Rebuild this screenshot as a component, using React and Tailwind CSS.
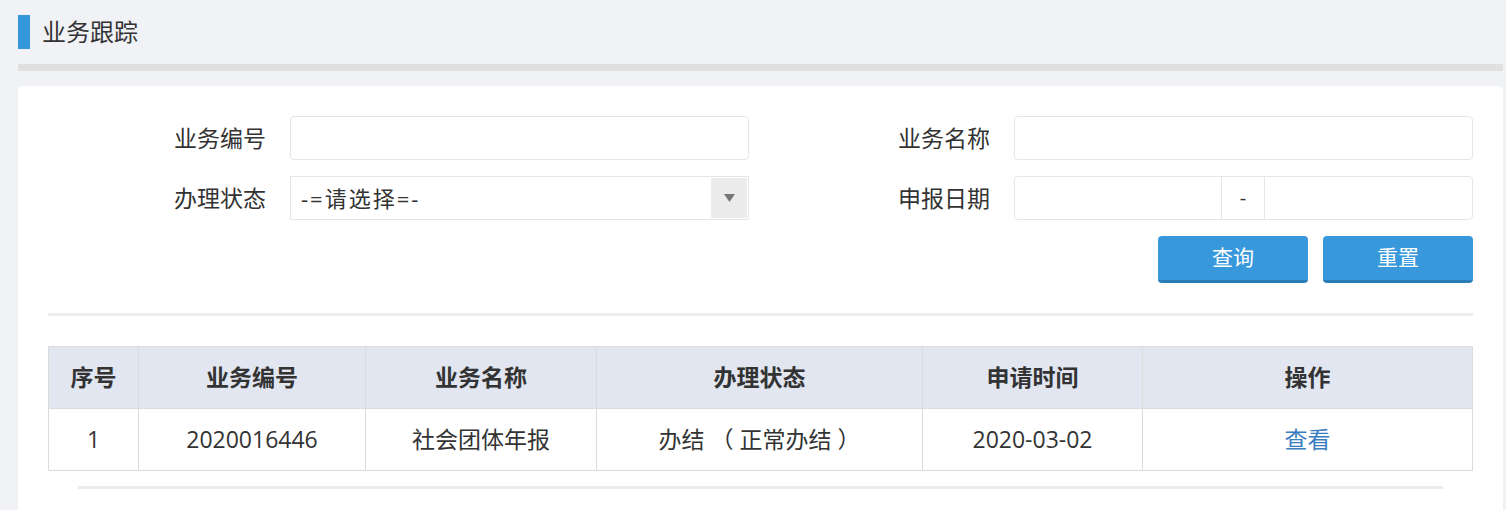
import React from "react";

const font = { fontFamily: '"Microsoft YaHei", "Open Sans", "Noto Sans CJK SC", sans-serif' };

function Field({ label, children }) {
  return (
    <div className="flex items-center gap-6">
      <div className="w-[218px] text-right text-[23px] text-[#333]">{label}</div>
      <div className="w-[459px] h-[44px]">{children}</div>
    </div>
  );
}

export default function App() {
  const cols = [
    { t: "序号", w: "w-[90px]", v: "1" },
    { t: "业务编号", w: "w-[227px]", v: "2020016446" },
    { t: "业务名称", w: "w-[231px]", v: "社会团体年报" },
    { t: "办理状态", w: "w-[326px]", v: "办结 （ 正常办结 ）" },
    { t: "申请时间", w: "w-[220px]", v: "2020-03-02" },
    { t: "操作", w: "", v: "查看", link: true },
  ];
  return (
    <div className="w-[1506px] h-[510px] overflow-hidden bg-[#f0f2f6] pl-[18px] pr-[3px]" style={font}>
      <div className="flex items-center h-[64px]">
        <div className="w-[12px] h-[34px] bg-[#3498db]" />
        <div className="ml-[12px] text-[24px] text-[#333] leading-none">业务跟踪</div>
      </div>
      <div className="h-[7px] bg-[#e0e0e0]" />
      <div className="mt-[15px] bg-white rounded-[5px] px-[30px] pt-[30px] pb-[40px]">
        <div className="flex flex-col gap-4">
          <div className="flex justify-between">
            <Field label="业务编号">
              <input className="w-full h-full border border-[#e6e6e6] rounded-[4px] outline-none" />
            </Field>
            <Field label="业务名称">
              <input className="w-full h-full border border-[#e6e6e6] rounded-[4px] outline-none" />
            </Field>
          </div>
          <div className="flex justify-between">
            <Field label="办理状态">
              <div className="w-full h-full border border-[#e6e6e6] flex items-stretch">
                <div className="flex-1 flex items-center pl-[10px] text-[22px] tracking-[2px] text-[#333]">-=请选择=-</div>
                <div className="w-[36px] my-[1px] mr-[1px] bg-[#ececec] flex items-center justify-center">
                  <svg width="11" height="8" viewBox="0 0 11 8"><path d="M0 0 L11 0 L5.5 8 Z" fill="#777" /></svg>
                </div>
              </div>
            </Field>
            <Field label="申报日期">
              <div className="w-full h-full border border-[#e6e6e6] rounded-[4px] flex">
                <div className="w-[207px] border-r border-[#e6e6e6]" />
                <div className="w-[43px] border-r border-[#e6e6e6] flex items-center justify-center text-[20px] text-[#333]">-</div>
                <div className="flex-1" />
              </div>
            </Field>
          </div>
          <div className="flex justify-end gap-[15px]">
            <button className="w-[150px] h-[47px] rounded-[4px] bg-[#3798db] border-b-[3px] border-[#2a7db6] text-white text-[21px]">查询</button>
            <button className="w-[150px] h-[47px] rounded-[4px] bg-[#3798db] border-b-[3px] border-[#2a7db6] text-white text-[21px]">重置</button>
          </div>
        </div>
        <div className="mt-[30px] h-[3px] bg-[#ececec]" />
        <table className="mt-[30px] w-full border-collapse text-[23px] text-[#333]">
          <thead>
            <tr className="bg-[#e1e6f0] h-[62px]">
              {cols.map((c) => (
                <th key={c.t} className={`${c.w} border border-[#dcdcdc] font-bold text-center`}>{c.t}</th>
              ))}
            </tr>
          </thead>
          <tbody>
            <tr className="h-[62px]">
              {cols.map((c) => (
                <td key={c.t} className={`border border-[#dcdcdc] text-center ${c.link ? "text-[#3a7dbf]" : ""}`}>{c.v}</td>
              ))}
            </tr>
          </tbody>
        </table>
        <div className="mt-[15px] mx-[30px] h-[3px] bg-[#ececec]" />
      </div>
    </div>
  );
}
